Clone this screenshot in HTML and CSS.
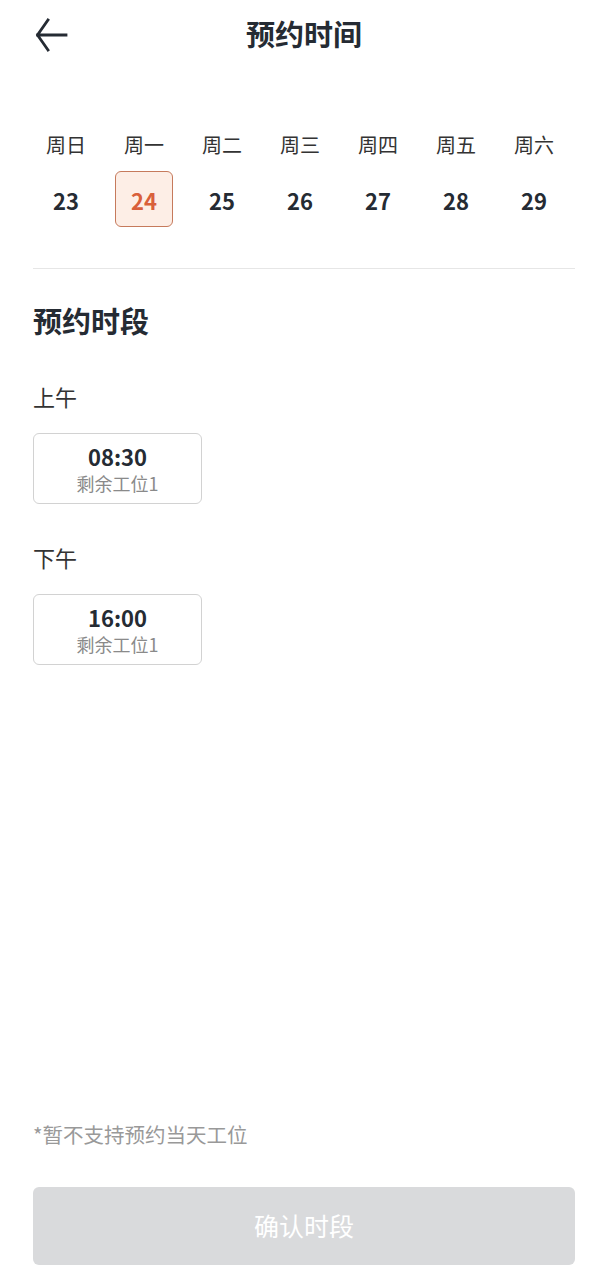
FILE: index.html
```html
<!doctype html>
<html lang="zh">
<head>
<meta charset="utf-8">
<title>预约时间</title>
<link rel="stylesheet" href="styles.css">
</head>
<body>
<div class="page">
	<div class="header">
		<a class="back" href="#">
			<svg width="34" height="34" viewBox="0 0 34 34"><path d="M13 2 L2.5 17 L13 32 M2.5 17 H31" fill="none" stroke="#252b33" stroke-width="2.8" stroke-linecap="square" stroke-linejoin="miter"/></svg>
		</a>
		<div class="title">预约时间</div>
	</div>
	<div class="week">
		<div class="day"><div class="wd">周日</div><div class="num">23</div></div>
		<div class="day"><div class="wd">周一</div><div class="num on">24</div></div>
		<div class="day"><div class="wd">周二</div><div class="num">25</div></div>
		<div class="day"><div class="wd">周三</div><div class="num">26</div></div>
		<div class="day"><div class="wd">周四</div><div class="num">27</div></div>
		<div class="day"><div class="wd">周五</div><div class="num">28</div></div>
		<div class="day"><div class="wd">周六</div><div class="num">29</div></div>
	</div>
	<div class="line"></div>
	<div class="main">
		<div class="maintitle">预约时段</div>
		<div class="part">上午</div>
		<div class="slot"><div class="time">08:30</div><div class="left">剩余工位1</div></div>
		<div class="part">下午</div>
		<div class="slot"><div class="time">16:00</div><div class="left">剩余工位1</div></div>
	</div>
	<div class="foot">
		<div class="tip">*暂不支持预约当天工位</div>
		<button class="submit" disabled>确认时段</button>
	</div>
</div>
</body>
</html>
```
FILE: styles.css
```css
*{margin:0;padding:0;box-sizing:border-box;font-family:'Noto Sans CJK SC','Noto Sans',sans-serif;}
html,body{width:100%;background:#fff;color:#252b33;}
.page{display:flex;flex-direction:column;min-height:1283px;padding:0 33px 18px;}
.header{position:relative;height:70px;line-height:70px;text-align:center;}
.back{position:absolute;left:2px;top:18px;width:34px;height:34px;line-height:0;}
.title{line-height:66px;font-size:29px;font-weight:bold;}
.week{display:grid;grid-template-columns:repeat(7,78px);margin:60px 0 0 -6px;}
.day{display:flex;flex-direction:column;align-items:center;}
.wd{height:30px;line-height:30px;font-size:20px;color:#333;}
.num{margin-top:11px;width:58px;height:56px;line-height:56px;text-align:center;font-size:22px;font-weight:bold;border:1.5px solid transparent;border-radius:6px;}
.num.on{border-color:#c67a5c;background:#fdeee6;color:#d9603b;}
.line{margin-top:41px;height:1px;background:#e6e6e6;}
.main{display:flex;flex-direction:column;align-items:flex-start;}
.maintitle{margin-top:31px;height:40px;line-height:40px;font-size:29px;font-weight:bold;}
.part{margin-top:41px;height:30px;line-height:30px;font-size:22px;color:#333;}
.part+.slot{margin-top:22px;}
.slot+.part{margin-top:38px;}
.slot{width:169px;padding:8px 0 7px;border:1px solid #d2d2d2;border-radius:6px;text-align:center;}
.time{height:28px;line-height:28px;font-size:22px;font-weight:bold;}
.left{height:26px;line-height:26px;font-size:18px;color:#8a8a8a;}
.foot{margin-top:auto;}
.tip{height:30px;line-height:30px;font-size:20.5px;color:#999;}
.submit{display:block;margin-top:38px;padding-bottom:3px;width:100%;height:78px;border:0;border-radius:6px;background:#d9dadc;color:#fff;font-size:25px;}
```
